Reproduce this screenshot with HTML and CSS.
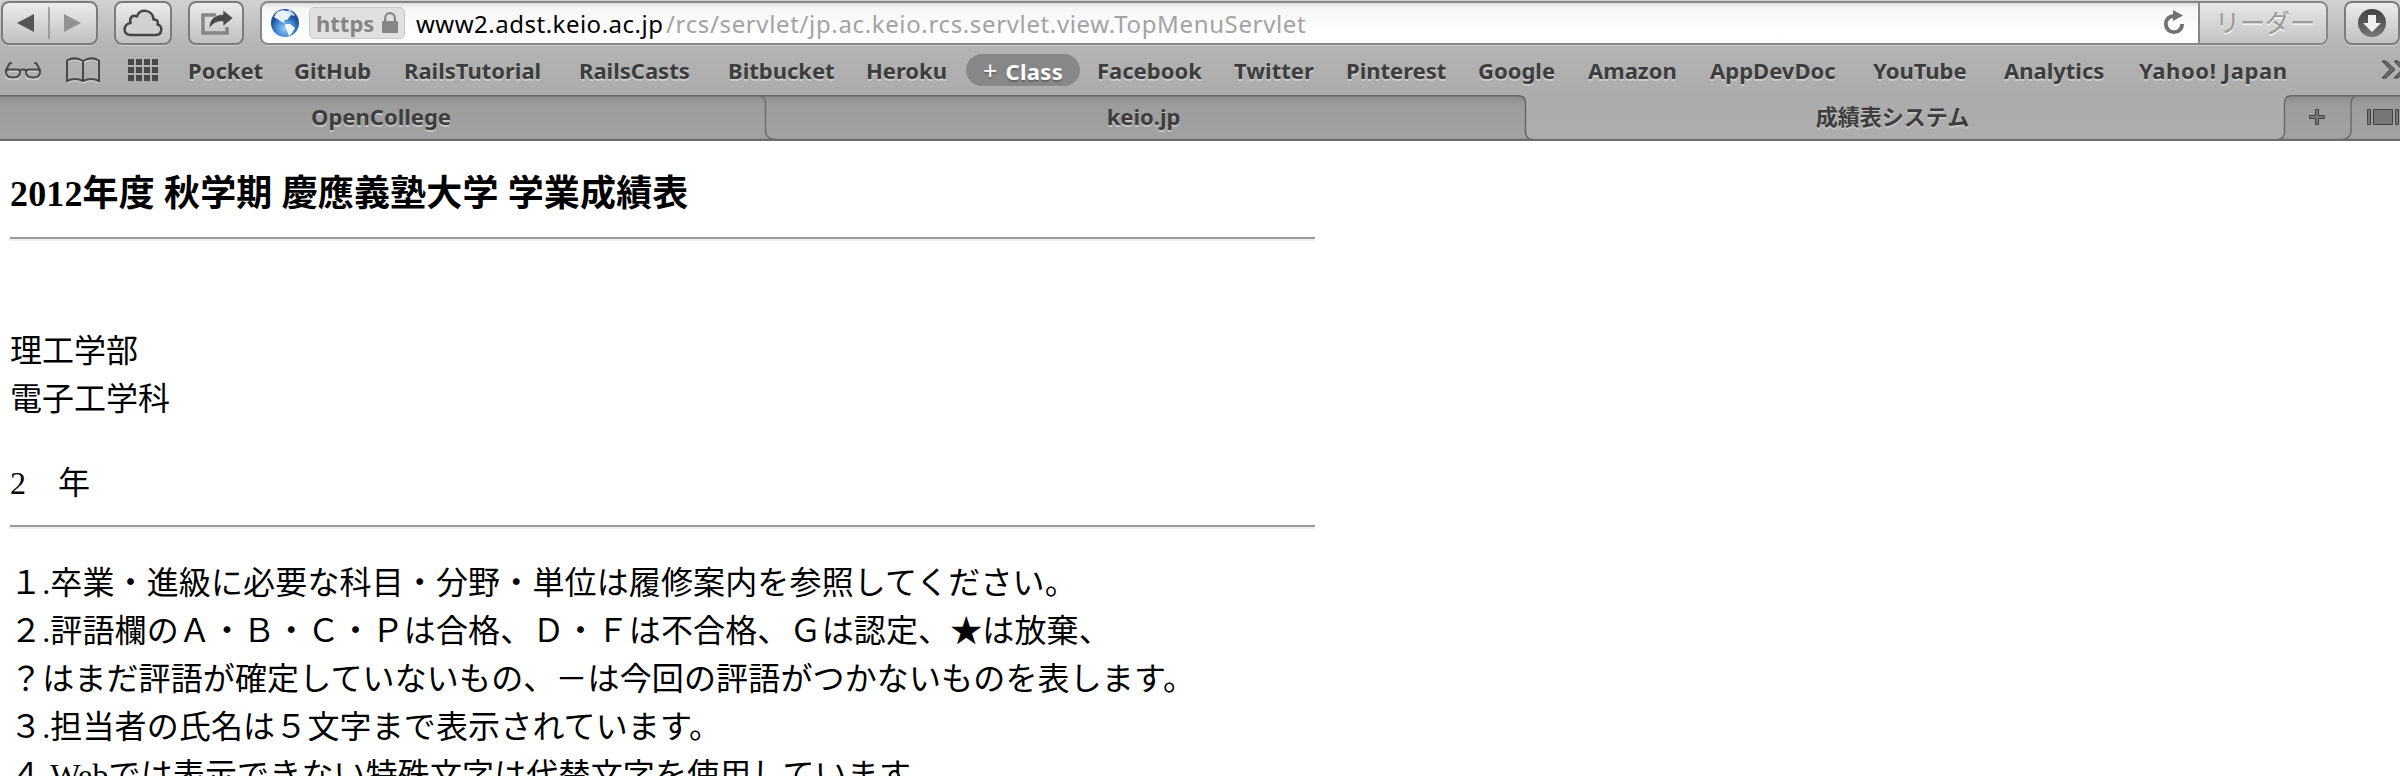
FILE: index.html
```html
<!DOCTYPE html>
<html lang="ja">
<head>
<meta charset="utf-8">
<title>成績表システム</title>
<link rel="stylesheet" href="styles.css">
</head>
<body>
<header class="chrome">
  <div class="toolbar">
    <div class="button nav">
      <svg width="96" height="42" viewBox="1 2 96 42"><path d="M17 23 34 14V32Z" fill="#555"/><path d="M81 23 64 14V32Z" fill="#929292"/><path d="M49 7V39" stroke="#8b8b8b" stroke-width="1.500"/></svg>
    </div>
    <div class="button cloud">
      <svg width="58" height="42" viewBox="114 2 58 42"><path d="M131 35C122 35 123 24 130.500 23C129 17 133 14.500 137 16.500C139 8 153 9 153.500 19.500C157.500 19 158.500 22 157.500 24.500C163 25 162.500 35 156 35Z" fill="#d0d0d0" stroke="#444" stroke-width="2.500" stroke-linejoin="round"/></svg>
    </div>
    <div class="button share">
      <svg width="55" height="42" viewBox="189 2 55 42"><path d="M217 15H204V33H228V27" fill="none" stroke="#858585" stroke-width="3.500"/><path d="M210 29C210 19 216 14.500 224 14.500V10L234 18 224 26.500V21.500C218 21 213 24 210 29Z" fill="#494949" stroke="#dedede" stroke-width=".7"/></svg>
    </div>
    <div class="address">
      <svg class="globe" width="30" height="30" viewBox="0 0 30 30"><defs><radialGradient id="sea" cx=".5" cy=".7"><stop offset="0" stop-color="#92cdf8"/><stop offset=".6" stop-color="#478ed5"/><stop offset="1" stop-color="#1f519c"/></radialGradient></defs><circle cx="15" cy="15" r="14" fill="url(#sea)"/><path d="M7 4 13 2 16 3 20 3 24 7 21 7 17 12 14 12 15 15 12 14 7 11 4 9Z" fill="#e8f3fc"/><path d="M15 16 20 16 25 20 22 25 19 28 17 23 15 19Z" fill="#f4f9fd"/><path d="M16 3 20 2 25 7 23 8Z" fill="#b9daf4"/></svg>
      <span class="secure"><span class="scheme">https</span><svg width="18" height="22" viewBox="0 0 18 22"><path d="M4.200 10V6a4.800 4.800 0 0 1 9.600 0v4" fill="none" stroke="#858585" stroke-width="2.200"/><rect x="1" y="9" width="16" height="12" rx="1" fill="#858585"/></svg></span>
      <span class="host">www2.adst.keio.ac.jp</span><span class="path">/rcs/servlet/jp.ac.keio.rcs.servlet.view.TopMenuServlet</span>
      <svg class="reload" width="24" height="28" viewBox="0 0 24 28"><path d="M12 6.800A8.200 8.200 0 1 0 20.200 15" fill="none" stroke="#707070" stroke-width="3.800"/><path d="M11 1 21 6.500 11 12Z" fill="#707070"/></svg>
      <span class="reader">リーダー</span>
    </div>
    <div class="button download">
      <svg width="55" height="42" viewBox="2344 2 55 42"><defs><linearGradient id="disc" x1="0" y1="0" x2="0" y2="1"><stop offset="0" stop-color="#404040"/><stop offset="1" stop-color="#777"/></linearGradient></defs><circle cx="2372" cy="23" r="14" fill="url(#disc)"/><path d="M2368 15H2376V23H2381L2372 32 2363 23H2368Z" fill="#f0f0f0"/></svg>
    </div>
  </div>
  <nav class="bookmarks">
    <svg class="tools" width="189" height="50" viewBox="0 45 189 50">
      <g fill="none" stroke="#fff" stroke-opacity=".35" stroke-width="2" transform="translate(0 1.500)"><rect x="6" y="69.500" width="14" height="8" rx="3.500"/><rect x="26" y="69.500" width="14" height="8" rx="3.500"/><path d="M67 81V60Q75 56 83 61Q91 56 99 60V81Q91 77 83 81Q75 77 67 81"/></g>
      <g fill="none" stroke="#494949" stroke-width="2"><path d="M6 72Q6 69.500 9 69.500H17Q20 69.500 20 72Q20 77.500 13 77.500Q6 77.500 6 72ZM26 72Q26 69.500 29 69.500H37Q40 69.500 40 72Q40 77.500 33 77.500Q26 77.500 26 72ZM19 70.500Q23 68.500 27 70.500M5.500 71 9.500 63.500 12 63M40.500 71 36.500 63.500 34 63"/><path d="M67 81V60.500Q75 56 83 61Q91 56 99 60.500V81Q91 77 83 81Q75 77 67 81ZM83 61V81"/></g>
      <path d="M128 59h6v6h-6zM136 59h6v6h-6zM144 59h6v6h-6zM152 59h6v6h-6zM128 67h6v6h-6zM136 67h6v6h-6zM144 67h6v6h-6zM152 67h6v6h-6zM128 75h6v6h-6zM136 75h6v6h-6zM144 75h6v6h-6zM152 75h6v6h-6z" fill="#484848"/>
    </svg>
    <span>Pocket</span><span>GitHub</span><span>RailsTutorial</span><span>RailsCasts</span><span>Bitbucket</span><span>Heroku</span><span class="pill"><span class="plus">+</span> Class</span><span>Facebook</span><span>Twitter</span><span>Pinterest</span><span>Google</span><span>Amazon</span><span>AppDevDoc</span><span>YouTube</span><span>Analytics</span><span class="wide">Yahoo! Japan</span>
    <svg class="more" width="20" height="20" viewBox="0 0 20 20"><path d="M1 1H5L14 9.500 5 18H1L9 9.500ZM13 1H17L26 9.500 17 18H13L21 9.500Z" fill="#6b6b6b" stroke="#3d3d3d"/></svg>
  </nav>
  <div class="tabs">
    <svg class="shapes" width="2400" height="46" viewBox="0 95 2400 46">
      <defs><linearGradient id="idle" x1="0" y1="0" x2="0" y2="1"><stop offset="0" stop-color="#8b8b8b"/><stop offset=".2" stop-color="#9c9c9c"/><stop offset="1" stop-color="#a3a3a3"/></linearGradient></defs>
      <g fill="url(#idle)" stroke="#686868" stroke-width="1.500">
        <path d="M-2 95.700H1518Q1525.500 95.700 1525.500 103V132Q1525.500 139 1533 139.500H-2Z"/>
        <path d="M2402 95.700H2292Q2284.500 95.700 2284.500 103V132Q2284.500 139 2277 139.500H2402Z"/>
      </g>
      <path d="M760 96Q765.500 97 765.500 103V131Q765.500 138 774 139.500M2357 96Q2351 97 2351 103V131Q2351 138 2343 139.500" fill="none" stroke="#6d6d6d" stroke-width="1.500"/>
      <path d="M0 140H2400" stroke="#6d6d6d" stroke-width="2"/>
      <path d="M2315.500 109.500h3v6h6v3h-6v6h-3v-6h-6v-3h6z" fill="#777" stroke="#444"/>
      <g fill="#777" stroke="#424242"><path d="M2367.500 109.500h3v15h-3zM2373.500 109.500h19v15h-19zM2395.500 109.500h3v15h-3z"/></g>
    </svg>
    <span class="tab">OpenCollege</span><span class="tab">keio.jp</span><span class="tab active">成績表システム</span>
  </div>
</header>
<main class="page">
  <h3>2012年度 秋学期 慶應義塾大学 学業成績表</h3>
  <hr>
  <p class="faculty">理工学部<br>電子工学科</p>
  <p class="grade">2　年</p>
  <hr>
  <p class="notes">１.卒業・進級に必要な科目・分野・単位は履修案内を参照してください。<br>２.評語欄のＡ・Ｂ・Ｃ・Ｐは合格、Ｄ・Ｆは不合格、Ｇは認定、★は放棄、<br>？はまだ評語が確定していないもの、－は今回の評語がつかないものを表します。<br>３.担当者の氏名は５文字まで表示されています。<br>４.Webでは表示できない特殊文字は代替文字を使用しています。</p>
</main>
</body>
</html>
```
FILE: styles.css
```css
* { box-sizing: border-box; }
body { margin: 0; height: 776px; overflow: hidden; background: #fff; color: #000; }
svg { display: block; flex: none; }

.chrome {
  height: 141px;
  background: linear-gradient(#d2d2d2 0, #b4b4b4 45px, #acacac 95px, #adadad 141px);
  font-family: "Noto Sans", "Noto Sans CJK JP", sans-serif;
  white-space: nowrap;
}
.toolbar { display: flex; height: 45px; padding: 1px 0 0 1px; }
.button {
  flex: none;
  height: 44px;
  border: 2px solid #7c7c7c;
  border-radius: 8px;
  background: linear-gradient(#ececec, #c0c0c0);
  box-shadow: 0 1px 0 #d0d0d0;
}
.button svg { margin: -1px -2px; }
.nav { width: 97px; margin-right: 16px; }
.cloud { width: 58px; margin-right: 16px; }
.share { width: 56px; margin-right: 16px; }
.download { width: 56px; margin-left: 16px; }
.address {
  display: flex;
  flex: none;
  align-items: center;
  width: 2068px;
  height: 44px;
  border: 2px solid #868886;
  border-radius: 8px;
  background: linear-gradient(#dcdcdc 0, #f6f6f6 5px, #fff 80%);
  box-shadow: 0 1px 0 #d0d0d0;
  overflow: hidden;
  font-size: 24px;
  line-height: 40px;
}
.globe { margin: 0 9px 0 8px; }
.secure {
  display: flex;
  align-items: center;
  flex: none;
  width: 96px;
  height: 32px;
  padding-left: 6px;
  border: 1px solid #c9c9c9;
  border-radius: 5px;
  background: #e0e0e0;
  color: #858585;
  font-size: 22px;
  font-weight: 700;
}
.scheme { width: 65px; }
.host { width: 250px; margin-left: 11px; padding-top: 2px; letter-spacing: .5px; }
.path { padding-top: 2px; color: #a3a3a3; letter-spacing: .64px; }
.reload { margin-left: auto; margin-right: 12px; }
.reader {
  width: 128px;
  height: 42px;
  padding-left: 15px;
  border-left: 2px solid #868886;
  background: linear-gradient(#e8e8e8, #c3c3c3);
  color: #999;
  font-size: 25px;
  text-shadow: 0 2px 0 #eee;
}

.bookmarks {
  display: grid;
  grid-template-columns: 188px 106px 110px 175px 149px 138px 100px 131px 137px 112px 132px 110px 122px 163px 131px 135px 242px 20px;
  align-items: center;
  height: 50px;
  color: #3d3d3d;
  font-size: 22px;
  font-weight: 700;
  line-height: 50px;
  text-shadow: 0 1.500px 0 #cbcbcb;
}
.pill {
  width: 114px;
  height: 32px;
  border-radius: 16px;
  background: #878787;
  color: #fff;
  line-height: 32px;
  letter-spacing: .3px;
  text-align: center;
  text-shadow: 0 2px 1px #666;
}
.plus { margin-right: 2px; font-weight: 400; font-size: 25px; }
.wide { letter-spacing: .6px; }
.tabs {
  display: grid;
  grid-template-columns: 765px 760px 759px;
  position: relative;
  height: 46px;
  color: #3d3d3d;
  font-size: 22px;
  font-weight: 700;
  line-height: 42px;
  text-align: center;
  text-shadow: 0 1.500px 0 #c4c4c4;
}
.shapes { position: absolute; inset: 0; }
.tab { position: relative; padding-right: 3px; }
.active { padding-right: 24px; }

.page {
  padding: 29px 10px 0;
  font-family: "Liberation Serif", "Noto Sans CJK JP", serif;
  font-size: 32px;
  line-height: 48px;
}
h3 { margin: 0 0 19px; font-size: 36px; line-height: 48px; letter-spacing: .15px; }
hr {
  width: 1305px;
  height: 4px;
  margin: 0;
  border: solid #9a9a9a;
  border-width: 2px 0 0;
  background: #eee;
}
p { margin: 0; }
.faculty { padding-top: 86px; }
.grade { padding: 36px 0 18px; }
.notes { padding-top: 30px; letter-spacing: .14px; }
```
